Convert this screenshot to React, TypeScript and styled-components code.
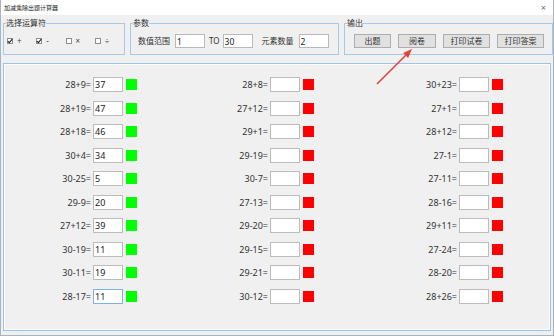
import React from 'react';
import styled, { createGlobalStyle } from 'styled-components';

interface Problem {
  text: string;
  answer: string;
  right: boolean;
  focused?: boolean;
}

const mk = (list: string[], answers: string[] = []): Problem[] =>
  list.map((text, i) => ({ text, answer: answers[i] || '', right: !!answers[i] }));

const columns: Problem[][] = [
  mk(
    ['28+9=', '28+19=', '28+18=', '30+4=', '30-25=', '29-9=', '27+12=', '30-19=', '30-11=', '28-17='],
    ['37', '47', '46', '34', '5', '20', '39', '11', '19', '11']
  ),
  mk(['28+8=', '27+12=', '29+1=', '29-19=', '30-7=', '27-13=', '29-20=', '29-15=', '29-21=', '30-12=']),
  mk(['30+23=', '27+1=', '28+12=', '27-1=', '27-11=', '28-16=', '29+11=', '27-24=', '28-20=', '28+26=']),
];
columns[0][9].focused = true;

const operators = [
  { sign: '+', checked: true },
  { sign: '-', checked: true },
  { sign: '×', checked: false },
  { sign: '÷', checked: false },
];

const buttons = [
  { label: '出题', width: 37 },
  { label: '阅卷', width: 38 },
  { label: '打印试卷', width: 47 },
  { label: '打印答案', width: 47 },
];

const GlobalStyle = createGlobalStyle`
  html, body {
    margin: 0;
    padding: 0;
    background: #f0f0f0;
  }
  body {
    font-family: "Noto Sans", "Noto Sans CJK SC", sans-serif;
    color: #333;
  }
`;

export default function App() {
  return (
    <>
      <GlobalStyle />
      <Window>
        <TitleBar>
          <Title>加减乘除出题计算器</Title>
          <Close>×</Close>
        </TitleBar>

        <TopRow>
          <Group width={122}>
            <Legend>选择运算符</Legend>
            <OpRow>
              {operators.map((op) => (
                <OpItem key={op.sign}>
                  <CheckBox>
                    {op.checked && (
                      <svg width="6" height="6" viewBox="0 0 6 6">
                        <path d="M0.8 3.1 L2.3 4.6 L5.3 1.2" fill="none" stroke="#222" strokeWidth="1.1" />
                      </svg>
                    )}
                  </CheckBox>
                  <OpSign>{op.sign}</OpSign>
                </OpItem>
              ))}
            </OpRow>
          </Group>

          <Group width={209}>
            <Legend>参数</Legend>
            <ParamRow>
              <ParamLabel>数值范围</ParamLabel>
              <ParamInput readOnly defaultValue="1" />
              <ToLabel>TO</ToLabel>
              <ParamInput readOnly defaultValue="30" />
              <ParamLabel gap={9}>元素数量</ParamLabel>
              <ParamInput readOnly defaultValue="2" />
            </ParamRow>
          </Group>

          <Group width={209}>
            <Legend>输出</Legend>
            <ButtonRow>
              {buttons.map((b) => (
                <Button key={b.label} width={b.width}>{b.label}</Button>
              ))}
            </ButtonRow>
          </Group>
        </TopRow>

        <Panel>
          {columns.map((col, ci) => (
            <Column key={ci}>
              {col.map((p, ri) => (
                <Row key={ri}>
                  <Expr>{p.text}</Expr>
                  <Answer readOnly defaultValue={p.answer} focused={!!p.focused} />
                  <Mark right={p.right} />
                </Row>
              ))}
            </Column>
          ))}
        </Panel>

        {/* annotation drawn over the window */}
        <Arrow width="554" height="336" viewBox="0 0 554 336">
          <line x1="376" y1="84" x2="405" y2="55" stroke="#e5433b" strokeWidth="1.6" />
          <polygon points="411,49 407.1,57.9 402.1,52.9" fill="#e5433b" />
        </Arrow>
      </Window>
    </>
  );
}

const Window = styled.div`
  position: relative;
  width: 554px;
  height: 336px;
  box-sizing: border-box;
  border: 1px solid #aab4be;
  border-top: none;
  background: #f0f0f0;
  overflow: hidden;
`;

const TitleBar = styled.div`
  height: 15px;
  background: #fff;
  display: flex;
  align-items: center;
  justify-content: space-between;
  padding: 0 7px 0 3px;
`;

const Title = styled.span`
  font-size: 6px;
  color: #222;
  line-height: 1;
`;

const Close = styled.span`
  font-size: 9px;
  color: #666;
  line-height: 1;
`;

const TopRow = styled.div`
  display: flex;
  gap: 5px;
  padding: 3px 0 0 2px;
`;

const Group = styled.fieldset<{ width: number }>`
  margin: 0;
  width: ${({ width }) => width}px;
  height: 37px;
  box-sizing: border-box;
  border: 1px solid #a6c9ea;
  padding: 0;
  min-width: 0;
`;

const Legend = styled.legend`
  font-size: 8px;
  line-height: 10px;
  padding: 0;
  margin-left: 2px;
  color: #333;
`;

const OpRow = styled.div`
  display: flex;
  align-items: center;
  height: 26px;
  padding-left: 3px;
`;

const OpItem = styled.div`
  display: flex;
  align-items: center;
  gap: 4px;
  width: 29.3px;
`;

const CheckBox = styled.span`
  width: 6px;
  height: 6px;
  box-sizing: border-box;
  border: 1px solid #8e8f8f;
  background: #fff;
  display: flex;
  align-items: center;
  justify-content: center;
  svg {
    flex: none;
  }
`;

const OpSign = styled.span`
  font-size: 8px;
  line-height: 1;
  color: #444;
`;

const ParamRow = styled.div`
  display: flex;
  align-items: center;
  height: 26px;
  padding-left: 7px;
`;

const ParamLabel = styled.span<{ gap?: number }>`
  font-size: 8px;
  line-height: 1;
  margin-left: ${({ gap }) => gap || 0}px;
  margin-right: 5px;
  color: #333;
`;

const ToLabel = styled.span`
  font-size: 8px;
  line-height: 1;
  margin: 0 3px 0 4px;
`;

const ParamInput = styled.input`
  width: 30px;
  height: 14px;
  box-sizing: border-box;
  border: 1px solid #b9b9b9;
  background: #fff;
  padding: 0 1px;
  margin: 0;
  font-family: "Noto Sans", sans-serif;
  font-size: 8.5px;
  color: #222;
  outline: none;
`;

const ButtonRow = styled.div`
  display: flex;
  align-items: center;
  gap: 7px;
  height: 26px;
  padding-left: 9px;
`;

const Button = styled.button<{ width: number }>`
  width: ${({ width }) => width}px;
  height: 14px;
  box-sizing: border-box;
  padding: 0;
  margin: 0;
  border: 1px solid #adadad;
  background: #e1e1e1;
  font-family: "Noto Sans CJK SC", sans-serif;
  font-size: 8px;
  line-height: 1;
  color: #333;
`;

const Panel = styled.div`
  margin: 8px 2px 0 2px;
  height: 268px;
  box-sizing: border-box;
  border: 1px solid #9dc3e6;
  box-shadow: inset 0 0 0 1px #fbfbfb;
  display: grid;
  grid-template-columns: 177px 189px 1fr;
  align-content: start;
  padding: 13px 0 0 27px;
`;

const Column = styled.div`
  display: flex;
  flex-direction: column;
  gap: 8.5px;
`;

const Row = styled.div`
  display: flex;
  align-items: center;
  height: 15px;
`;

const Expr = styled.span`
  width: 60px;
  text-align: right;
  font-size: 9px;
  line-height: 1;
  color: #333;
  margin-right: 2px;
`;

const Answer = styled.input<{ focused: boolean }>`
  width: 30px;
  height: 15px;
  box-sizing: border-box;
  margin: 0;
  padding: 0 1px;
  border: 1px solid ${({ focused }) => (focused ? '#7eb4ea' : '#bcbcbc')};
  background: #fff;
  font-family: "Noto Sans", sans-serif;
  font-size: 9px;
  color: #222;
  outline: none;
`;

const Mark = styled.span<{ right: boolean }>`
  width: 11px;
  height: 11px;
  margin-left: 3px;
  background: ${({ right }) => (right ? '#00ff00' : '#ff0000')};
`;

const Arrow = styled.svg`
  position: absolute;
  left: 0;
  top: 0;
  pointer-events: none;
`;
